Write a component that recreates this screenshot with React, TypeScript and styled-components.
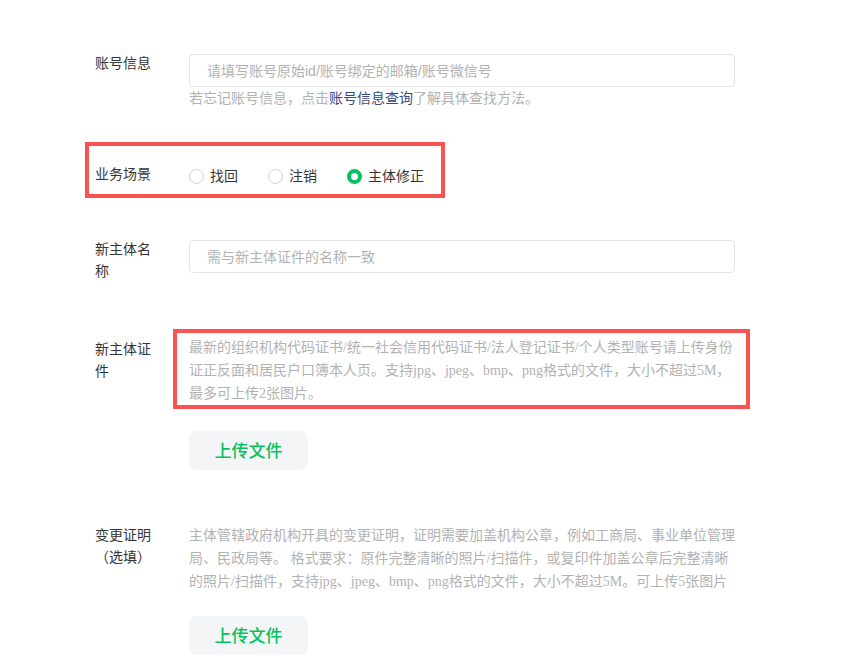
import { createGlobalStyle, styled } from "styled-components";

const GlobalStyle = createGlobalStyle`
  body {
    margin: 0;
    background: #ffffff;
    font-family: "Liberation Sans", "Noto Sans CJK SC", sans-serif;
    color: #353535;
  }
`;

const Form = styled.div`
  display: flex;
  flex-direction: column;
  align-items: flex-start;
  padding: 52px 0 40px 95px;
`;

const Row = styled.div<{ $gap: number }>`
  display: flex;
  align-items: flex-start;
  margin-top: ${(p) => p.$gap}px;
`;

const Label = styled.div<{ $offset?: number }>`
  width: 60px;
  flex-shrink: 0;
  margin-right: 34px;
  margin-top: ${(p) => p.$offset ?? 0}px;
  font-size: 14px;
  line-height: 22px;
  color: #353535;
`;

const Field = styled.div`
  width: 546px;
  display: flex;
  flex-direction: column;
  align-items: flex-start;
`;

const TextInput = styled.input`
  box-sizing: border-box;
  width: 100%;
  height: 33px;
  margin-top: 2px;
  padding: 0 17px;
  border: 1px solid #e4e4e6;
  border-radius: 4px;
  font-family: "Liberation Sans", "Noto Sans CJK SC", sans-serif;
  font-size: 14px;
  color: #353535;
  outline: none;
  &::placeholder {
    color: #b2b2b2;
  }
`;

const Hint = styled.div`
  font-size: 14px;
  line-height: 22px;
  color: #b2b2b2;
`;

const Link = styled.a`
  color: #3b4a7e;
  text-decoration: none;
`;

const Highlight = styled.div`
  display: flex;
  align-items: flex-start;
  margin-top: 33px;
  margin-left: -10px;
  padding: 17px 17px 6px 6px;
  border: 4px solid #fa5151;
`;

const RadioGroup = styled.div`
  display: flex;
  align-items: center;
  gap: 30px;
  height: 24px;
  margin-top: 1px;
`;

const RadioItem = styled.label`
  display: flex;
  align-items: center;
  gap: 6px;
  font-size: 14px;
  line-height: 22px;
  color: #353535;
`;

const RadioCircle = styled.span<{ $checked?: boolean }>`
  box-sizing: border-box;
  width: 15px;
  height: 15px;
  border-radius: 50%;
  background: #ffffff;
  border: ${(p) => (p.$checked ? "4px solid #07c160" : "1px solid #cfcfd2")};
`;

const Desc = styled.div`
  font-family: "Liberation Serif", "Noto Sans CJK SC", serif;
  font-size: 14px;
  line-height: 23px;
  color: #b2b2b2;
`;

const DescBox = styled.div`
  align-self: stretch;
  margin: 0 -15px 0 -16px;
  padding: 3px 11px 0 12px;
  border: 4px solid #fa5151;
`;

const UploadButton = styled.button<{ $gap: number }>`
  width: 119px;
  height: 39px;
  margin-top: ${(p) => p.$gap}px;
  padding: 0 0 2px;
  border: none;
  border-radius: 8px;
  background: #f4f5f7;
  color: #07c160;
  font-family: "Noto Sans CJK SC", sans-serif;
  font-size: 17px;
  font-weight: 500;
  cursor: pointer;
`;

const options = [
  { label: "找回", checked: false },
  { label: "注销", checked: false },
  { label: "主体修正", checked: true },
];

export default function App() {
  return (
    <>
      <GlobalStyle />
      <Form>
        <Row $gap={0}>
          <Label>账号信息</Label>
          <Field>
            <TextInput placeholder="请填写账号原始id/账号绑定的邮箱/账号微信号" />
            <Hint>
              若忘记账号信息，点击<Link>账号信息查询</Link>了解具体查找方法。
            </Hint>
          </Field>
        </Row>

        <Highlight>
          <Label>业务场景</Label>
          <RadioGroup>
            {options.map((o) => (
              <RadioItem key={o.label}>
                <RadioCircle $checked={o.checked} />
                {o.label}
              </RadioItem>
            ))}
          </RadioGroup>
        </Highlight>

        <Row $gap={40}>
          <Label>新主体名称</Label>
          <Field>
            <TextInput placeholder="需与新主体证件的名称一致" />
          </Field>
        </Row>

        <Row $gap={47}>
          <Label $offset={9}>新主体证件</Label>
          <Field>
            <DescBox>
              <Desc>
                最新的组织机构代码证书/统一社会信用代码证书/法人登记证书/个人类型账号请上传身份证正反面和居民户口簿本人页。支持jpg、jpeg、bmp、png格式的文件，大小不超过5M，最多可上传2张图片。
              </Desc>
            </DescBox>
            <UploadButton $gap={22}>上传文件</UploadButton>
          </Field>
        </Row>

        <Row $gap={54}>
          <Label>变更证明（选填）</Label>
          <Field>
            <Desc>
              主体管辖政府机构开具的变更证明，证明需要加盖机构公章，例如工商局、事业单位管理局、民政局等。 格式要求：原件完整清晰的照片/扫描件，或复印件加盖公章后完整清晰的照片/扫描件，支持jpg、jpeg、bmp、png格式的文件，大小不超过5M。可上传5张图片
            </Desc>
            <UploadButton $gap={23}>上传文件</UploadButton>
          </Field>
        </Row>
      </Form>
    </>
  );
}
